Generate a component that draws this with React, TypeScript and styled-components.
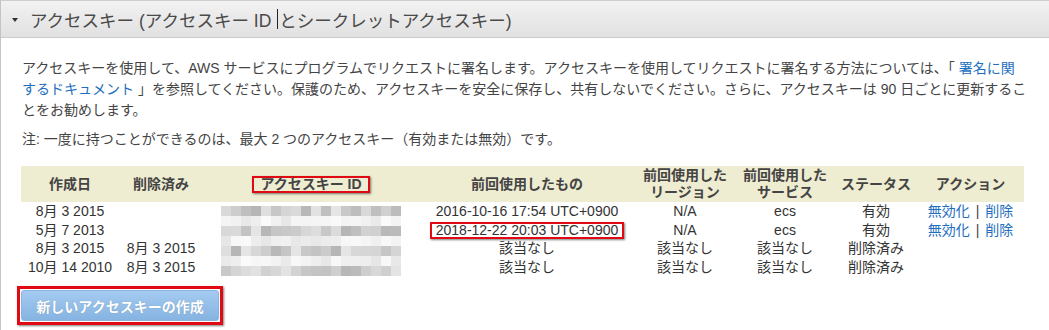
import { Fragment } from "react";
import styled, { createGlobalStyle } from "styled-components";

type KeyRow = {
  created: string;
  deleted: string;
  lastUsed: string;
  region: string;
  service: string;
  status: string;
  active: boolean;
  marked?: boolean;
};

const rows: KeyRow[] = [
  { created: "8月 3 2015", deleted: "", lastUsed: "2016-10-16 17:54 UTC+0900", region: "N/A", service: "ecs", status: "有効", active: true },
  { created: "5月 7 2013", deleted: "", lastUsed: "2018-12-22 20:03 UTC+0900", region: "N/A", service: "ecs", status: "有効", active: true, marked: true },
  { created: "8月 3 2015", deleted: "8月 3 2015", lastUsed: "該当なし", region: "該当なし", service: "該当なし", status: "削除済み", active: false },
  { created: "10月 14 2010", deleted: "8月 3 2015", lastUsed: "該当なし", region: "該当なし", service: "該当なし", status: "削除済み", active: false },
];

const colWidths = [98, 84, 216, 216, 100, 100, 82, 107];

// redacted key ids: a pixel mosaic, 18 x 7 blocks
const mosaic = (() => {
  let seed = 17;
  const rand = () => {
    seed = (seed * 1103515245 + 12345) % 2147483648;
    return seed / 2147483648;
  };
  const out: string[][] = [];
  for (let r = 0; r < 7; r++) {
    const line: string[] = [];
    for (let c = 0; c < 18; c++) {
      const dark = r % 2 === 0;
      const v = dark ? Math.round(180 + rand() * 50) : Math.round(230 + rand() * 20);
      line.push(`rgb(${v},${v},${v})`);
    }
    out.push(line);
  }
  return out;
})();

const GlobalStyle = createGlobalStyle`
  html, body {
    margin: 0;
    padding: 0;
    background: #fff;
  }
  body {
    font-family: "Liberation Sans", Arial, "Noto Sans CJK JP", sans-serif;
    color: #444;
    overflow: hidden;
  }
`;

const Panel = styled.section`
  box-sizing: border-box;
  height: 330px;
  border-top: 1px solid #cfcfcf;
  border-left: 1px solid #c4c4c4;
`;

const PanelHeader = styled.div`
  display: flex;
  align-items: center;
  height: 36px;
  padding-left: 11px;
  background: linear-gradient(#f2f2f2, #e1e1e1);
  border-bottom: 1px solid #cbcbcb;
  font-size: 17.5px;
  color: #4a4a4a;
  white-space: pre;
`;

const Caret = styled.span`
  width: 0;
  height: 0;
  margin: 2px 12px 0 0;
  border-left: 3.5px solid transparent;
  border-right: 3.5px solid transparent;
  border-top: 4px solid #333;
`;

const Cursor = styled.span`
  display: inline-block;
  width: 1px;
  height: 20px;
  margin: 0 1px 0 1px;
  background: #222;
  vertical-align: middle;
`;

const PanelBody = styled.div`
  padding: 20px 20px 0 20px;
`;

const Paragraph = styled.p<{ $gap: number }>`
  margin: 0 0 ${(p) => p.$gap}px 1px;
  font-size: 14px;
  line-height: 21px;
  color: #444;
  white-space: nowrap;
`;

const Link = styled.a`
  color: #1e6fc0;
  text-decoration: none;
`;

const KeyTable = styled.table`
  width: 1003px;
  border-collapse: collapse;
  table-layout: fixed;
  font-size: 14px;
`;

const HeadCell = styled.th`
  height: 36px;
  padding: 0;
  background: #eeecd1;
  color: #444;
  font-weight: bold;
  line-height: 17px;
  text-align: center;
  vertical-align: middle;
`;

const Cell = styled.td`
  height: 18.5px;
  padding: 0;
  line-height: 18.5px;
  text-align: center;
  color: #333;
  white-space: nowrap;
`;

const MosaicCell = styled.td`
  padding: 4px 0 0 0;
  vertical-align: top;
`;

const Highlight = styled.span<{ $pad: number }>`
  display: inline-block;
  padding: 0 ${(p) => p.$pad}px;
  border: 2px solid #e00b12;
  box-shadow: 1px 1px 2px rgba(0, 0, 0, 0.5);
  line-height: 13px;
  vertical-align: middle;
`;

const ButtonFrame = styled.div`
  display: inline-block;
  margin: 10px 0 0 -4px;
  padding: 1px;
  border: 3px solid #e00b12;
  box-shadow: 1px 1px 2px rgba(0, 0, 0, 0.5);
`;

const CreateButton = styled.button`
  display: block;
  width: 198px;
  height: 31px;
  padding: 0;
  border: 1px solid #8db3dc;
  border-radius: 3px;
  background: linear-gradient(#a4cbf1, #86b3e1);
  color: #fff;
  font-family: inherit;
  font-size: 14px;
  font-weight: bold;
  text-shadow: 0 0 1px rgba(0, 0, 0, 0.25);
`;

const Separator = styled.span`
  color: #444;
  margin: 0 6px;
`;

const Mosaic = () => (
  <svg width="180" height="70" viewBox="0 0 180 70" style={{ display: "block", margin: "0 auto" }}>
    {mosaic.map((line, r) =>
      line.map((fill, c) => <rect key={`${r}-${c}`} x={c * 10} y={r * 10} width="10" height="10" fill={fill} />)
    )}
  </svg>
);

const App = () => {
  return (
    <>
      <GlobalStyle />
      <Panel>
        <PanelHeader>
          <Caret />
          {"アクセスキー (アクセスキー ID "}
          <Cursor />
          {"とシークレットアクセスキー)"}
        </PanelHeader>
        <PanelBody>
          <Paragraph $gap={8}>
            アクセスキーを使用して、AWS サービスにプログラムでリクエストに署名します。アクセスキーを使用してリクエストに署名する方法については、「 <Link href="#">署名に関</Link>
            <br />
            <Link href="#">するドキュメント</Link> 」を参照してください。保護のため、アクセスキーを安全に保存し、共有しないでください。さらに、アクセスキーは 90 日ごとに更新するこ
            <br />
            とをお勧めします。
          </Paragraph>
          <Paragraph $gap={16}>注: 一度に持つことができるのは、最大 2 つのアクセスキー（有効または無効）です。</Paragraph>
          <KeyTable>
            <colgroup>
              {colWidths.map((w, i) => (
                <col key={i} style={{ width: w }} />
              ))}
            </colgroup>
            <thead>
              <tr>
                <HeadCell>作成日</HeadCell>
                <HeadCell>削除済み</HeadCell>
                <HeadCell>
                  <Highlight $pad={6}>アクセスキー ID</Highlight>
                </HeadCell>
                <HeadCell>前回使用したもの</HeadCell>
                <HeadCell>
                  前回使用した
                  <br />
                  リージョン
                </HeadCell>
                <HeadCell>
                  前回使用した
                  <br />
                  サービス
                </HeadCell>
                <HeadCell>ステータス</HeadCell>
                <HeadCell>アクション</HeadCell>
              </tr>
            </thead>
            <tbody>
              {rows.map((row, i) => (
                <tr key={i}>
                  <Cell>{row.created}</Cell>
                  <Cell>{row.deleted}</Cell>
                  {i === 0 && (
                    <MosaicCell rowSpan={rows.length}>
                      <Mosaic />
                    </MosaicCell>
                  )}
                  <Cell>
                    {row.marked ? <Highlight $pad={4}>{row.lastUsed}</Highlight> : row.lastUsed}
                  </Cell>
                  <Cell>{row.region}</Cell>
                  <Cell>{row.service}</Cell>
                  <Cell>{row.status}</Cell>
                  <Cell>
                    {row.active && (
                      <Fragment>
                        <Link href="#">無効化</Link>
                        <Separator>|</Separator>
                        <Link href="#">削除</Link>
                      </Fragment>
                    )}
                  </Cell>
                </tr>
              ))}
            </tbody>
          </KeyTable>
          <ButtonFrame>
            <CreateButton>新しいアクセスキーの作成</CreateButton>
          </ButtonFrame>
        </PanelBody>
      </Panel>
    </>
  );
};

export default App;
